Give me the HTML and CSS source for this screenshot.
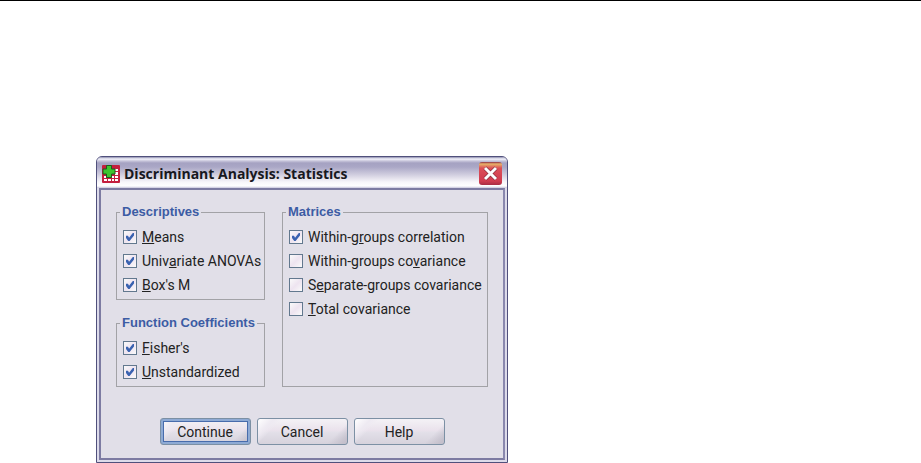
FILE: index.html
```html
<!DOCTYPE html>
<html lang="en">
<head>
    <meta charset="UTF-8">
    <meta name="viewport" content="width=device-width, initial-scale=1.0">
    <title>Discriminant Analysis: Statistics</title>
    <link rel="stylesheet" href="styles.css">
</head>
<body>
    <div class="dialog" role="dialog" aria-labelledby="dialogTitle">
        <div class="title-bar">
            <svg class="app-icon" width="18" height="18" viewBox="0 0 18 18">
                <rect width="18" height="18" rx="1" fill="#c41e3f"/>
                <path d="M13 4h3v2h-3zM13 7h3v3h-3zM2 11h2v2H2zM10 11h2v2h-2zM13 11h3v2h-3zM2 14h3v2H2zM6 14h3v2H6zM10 14h2v2h-2zM13 14h3v2h-3z" fill="#fff"/>
                <path d="M4.500.5h5v3.500h3.500v5H9.500v3.500h-5V9H1V4h3.500z" fill="#3cc52e" stroke="#1f5a20"/>
            </svg>
            <h1 id="dialogTitle">Discriminant Analysis: Statistics</h1>
            <button class="close" type="button" aria-label="Close">
                <svg width="23" height="23" viewBox="0 0 23 23">
                    <path d="M6 6l11 11M17 6L6 17" stroke="#7c2432" stroke-width="4"/>
                    <path d="M6 6l11 11M17 6L6 17" stroke="#fff" stroke-width="3"/>
                </svg>
            </button>
        </div>

        <form class="dialog-body">
            <div class="groups">
                <div class="column">
                    <fieldset>
                        <legend>Descriptives</legend>
                        <label><input type="checkbox" checked><span><u>M</u>eans</span></label>
                        <label><input type="checkbox" checked><span>Univ<u>a</u>riate ANOVAs</span></label>
                        <label><input type="checkbox" checked><span><u>B</u>ox's M</span></label>
                    </fieldset>
                    <fieldset>
                        <legend>Function Coefficients</legend>
                        <label><input type="checkbox" checked><span><u>F</u>isher's</span></label>
                        <label><input type="checkbox" checked><span><u>U</u>nstandardized</span></label>
                    </fieldset>
                </div>
                <fieldset>
                    <legend>Matrices</legend>
                    <label><input type="checkbox" checked><span>Within-g<u>r</u>oups correlation</span></label>
                    <label><input type="checkbox"><span>Within-groups co<u>v</u>ariance</span></label>
                    <label><input type="checkbox"><span>S<u>e</u>parate-groups covariance</span></label>
                    <label><input type="checkbox"><span><u>T</u>otal covariance</span></label>
                </fieldset>
            </div>

            <div class="buttons">
                <button class="btn btn-default" type="button">Continue</button>
                <button class="btn" type="button">Cancel</button>
                <button class="btn" type="button">Help</button>
            </div>
        </form>
    </div>
</body>
</html>
```
FILE: styles.css
```css
* {
    box-sizing: border-box;
}
body {
    margin: 0;
    border-top: 1px solid black;
    background-color: white;
    color: #222;
    font-family: "Liberation Sans", Arial, sans-serif;
    font-size: 13px;
}
.dialog {
    max-width: 412px;
    margin: 155px 0 0 96px;
    padding: 0 2px 2px;
    border: 1px solid #50507c;
    border-radius: 6px 6px 0 0;
    background-color: #dddbea;
}
.title-bar {
    display: flex;
    align-items: center;
    height: 31px;
    margin: 0 -2px;
    padding: 2px 5px 0;
    border-radius: 5px 5px 0 0;
    background: linear-gradient(#8c8cae 0, #f4f4fc 2px, #c6c4da 4px, #a5a2c2 6px, #aaa7c6 10px, #d2cfe0 18px, #f8f6fa 25px, #fff 29px, #c8c6dc 31px);
}
.app-icon {
    flex: none;
    margin-right: 4px;
}
h1 {
    flex: 1;
    margin: 0;
    color: #181820;
    font-family: "Open Sans", "Noto Sans", sans-serif;
    font-size: 14px;
    font-weight: 700;
    line-height: 20px;
    white-space: nowrap;
}
.close {
    display: block;
    width: 23px;
    height: 23px;
    padding: 0;
    border: 0;
    border-radius: 3px;
    background: linear-gradient(#8c2c44 0, #e8b468 2px, #dc5058 6px, #d03c50 19px, #a82c44 23px);
}
.close svg {
    display: block;
}
.dialog-body {
    padding: 14px 15px 13px;
    border: 2px solid #7d7ba2;
    border-right-color: #8a88ae;
    background-color: #e1dfe8;
}
.groups {
    display: grid;
    grid-template-columns: 149fr 206fr;
    gap: 17px;
}
.column {
    display: flex;
    flex-direction: column;
    gap: 15px;
}
fieldset {
    min-width: 0;
    margin: 0;
    padding: 5px 0 2px 6px;
    border: 1px solid #a2a2a6;
}
legend {
    margin-left: -3px;
    padding: 0 2px;
    color: #3c5ca4;
    font-weight: bold;
    line-height: 16px;
}
label {
    display: flex;
    align-items: center;
    gap: 5px;
    height: 24px;
    font-family: Roboto, "Liberation Sans", sans-serif;
    font-size: 14px;
    white-space: nowrap;
}
input[type="checkbox"] {
    appearance: none;
    flex: none;
    width: 14px;
    height: 14px;
    margin: 0;
    border: 1px solid #62788e;
    background: linear-gradient(135deg, #fafafa, #eee4f0 50%, #fafafa);
}
input[type="checkbox"]:checked::before {
    content: "";
    display: block;
    width: 8px;
    height: 8px;
    margin: 2px;
    background-color: #3a62b0;
    clip-path: polygon(0 35%, 25% 35%, 38% 58%, 85% 0, 100% 0, 100% 30%, 45% 100%, 28% 100%, 0 62%);
}
.buttons {
    display: flex;
    justify-content: center;
    gap: 6px;
    margin-top: 31px;
}
.btn {
    width: 91px;
    height: 27px;
    padding: 0;
    border: 1px solid #7c90a4;
    border-radius: 3px;
    background: linear-gradient(135deg, #fff 0, #eeeaf2 14%, transparent 22%, transparent 82%, #c4c0cc 96%), linear-gradient(#f4f2f6, #eae2ec 45%, #e2dfe8 55%, #d6d2dc);
    color: #222;
    font-family: Roboto, "Liberation Sans", sans-serif;
    font-size: 14px;
}
.btn-default {
    box-shadow: inset 0 0 0 2px #8eaad4, inset 0 0 0 3px #486cac;
}
```
